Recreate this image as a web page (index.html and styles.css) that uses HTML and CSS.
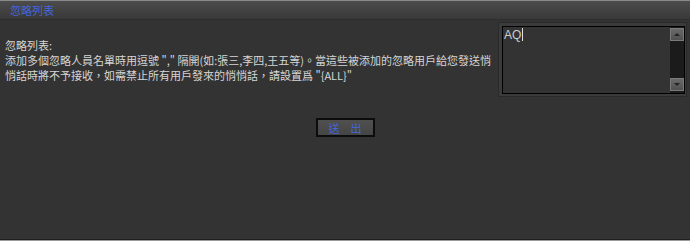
FILE: index.html
```html
<!DOCTYPE html>
<html lang="zh-Hant">
<head>
  <meta charset="UTF-8">
  <title>忽略列表</title>
  <link rel="stylesheet" href="styles.css">
</head>
<body>
  <!-- Ventana de lista de ignorados -->
  <div class="dialog">
    <div class="dialog-title">忽略列表</div>

    <div class="dialog-body">
      <div class="content-row">
        <div class="desc">
          <p>忽略列表:</p>
          <p>添加多個忽略人員名單時用逗號 "," 隔開(如:張三,李四,王五等)。當這些被添加的忽略用戶給您發送悄<br>悄話時將不予接收，如需禁止所有用戶發來的悄悄話，請設置爲 "{ALL}"</p>
        </div>

        <!-- Caja de texto con scroll -->
        <div class="list-box">
          <div class="list-inner">
            <div class="list-text">AQ<span class="caret"></span></div>
            <div class="scrollbar">
              <span class="scroll-btn up"></span>
              <span class="scroll-btn down"></span>
            </div>
          </div>
        </div>
      </div>

      <div class="actions">
        <button class="btn-submit">送　出</button>
      </div>
    </div>
  </div>
</body>
</html>
```

FILE: styles.css
```css
/* RESET */
* {
  margin: 0;
  padding: 0;
  box-sizing: border-box;
}

body {
  background-color: #ffffff;
  font-family: "Noto Sans CJK TC", "Liberation Sans", sans-serif;
  font-size: 11px;
  color: #d6d6d6;
}

/* VENTANA */
.dialog {
  width: 690px;
  height: 241px;
  background-color: #333333;
  border-top: 1px solid #8a8a8a;
  border-bottom: 1px solid #9a9a9a;
  box-shadow: inset 0 -1px 0 #1e1e1e;
}

.dialog-title {
  height: 19px;
  padding-left: 10px;
  line-height: 19px;
  color: #4466dd;
  background: linear-gradient(#4c4c4c, #393939);
  border-bottom: 1px solid #2e2e2e;
}

.dialog-body {
  padding-top: 2px;
}

.content-row {
  display: flex;
}

.desc {
  flex: 1;
  padding: 16px 0 0 5px;
  line-height: 15px;
}

/* CAJA DE TEXTO */
.list-box {
  width: 189px;
  height: 75px;
  margin-right: 3px;
  padding: 3px 1px 2px 3px;
  background-color: #3b3b3b;
  border: 1px solid #2a2a2a;
}

.list-inner {
  display: flex;
  height: 100%;
  background-color: #333333;
  border: 1px solid #000000;
}

.list-text {
  flex: 1;
  padding: 1px 0 0 1px;
  font-family: "Liberation Sans", sans-serif;
  font-size: 12px;
  line-height: 14px;
  color: #cfcfcf;
}

.caret {
  display: inline-block;
  width: 1px;
  height: 13px;
  margin-left: 1px;
  vertical-align: -2px;
  background-color: #e0e0e0;
}

.scrollbar {
  width: 14px;
  display: flex;
  flex-direction: column;
  justify-content: space-between;
  padding: 1px 0 2px;
  background-color: #1b1b1b;
}

.scroll-btn {
  position: relative;
  height: 13px;
  background: linear-gradient(#6a6a6a, #505050);
  border: 1px solid #7a7a7a;
}

.scroll-btn::after {
  content: "";
  position: absolute;
  left: 3px;
  border-left: 3px solid transparent;
  border-right: 3px solid transparent;
}

.scroll-btn.up::after {
  top: 4px;
  border-bottom: 3px solid #222222;
}

.scroll-btn.down::after {
  top: 4px;
  border-top: 3px solid #222222;
}

/* BOTÓN */
.actions {
  display: flex;
  justify-content: center;
  margin-top: 21px;
}

.btn-submit {
  width: 59px;
  height: 19px;
  font-family: "Noto Sans CJK TC", sans-serif;
  font-size: 11px;
  letter-spacing: 0;
  color: #4466dd;
  background: linear-gradient(#505050, #454545);
  border: 2px solid #0c0c0c;
  cursor: pointer;
}
```
